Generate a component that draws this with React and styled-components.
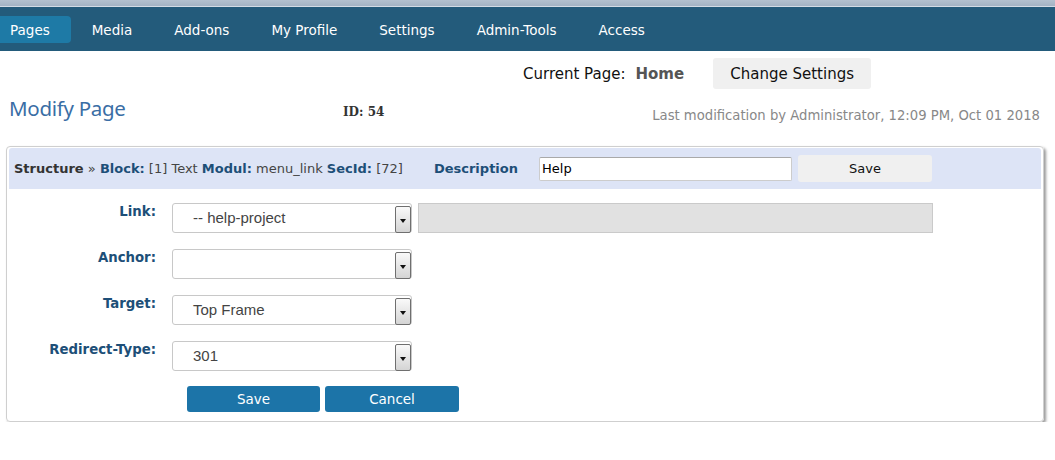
import React from 'react';
import styled, { createGlobalStyle } from 'styled-components';

const GlobalStyle = createGlobalStyle`
  body {
    margin: 0;
    background: #fff;
    font-family: "DejaVu Sans", Verdana, sans-serif;
    font-size: 13px;
    color: #333;
  }
`;

const TopStrip = styled.div`
  height: 6px;
  background: linear-gradient(#b3c1cf, #a3b3c4);
  border-bottom: 1px solid #d3dce5;
`;

const Nav = styled.nav`
  height: 44px;
  background: #235b7b;
  display: flex;
  align-items: center;
`;

const NavList = styled.ul`
  list-style: none;
  margin: 1px 0 0 -11px;
  padding: 0;
  display: flex;
`;

const NavItem = styled.li`
  padding: 0 21px;
  height: 27px;
  line-height: 28px;
  border-radius: 4px;
  color: #fff;
  font-size: 13.5px;
  background: ${(p) => (p.$active ? '#1e7aa6' : 'transparent')};
`;

const CurrentBar = styled.div`
  display: flex;
  align-items: center;
  padding-left: 523px;
  margin-top: 7px;
  font-size: 15px;
  color: #111;
`;

const CurrentName = styled.b`
  color: #555;
  margin-left: 10px;
`;

const GreyButton = styled.button`
  background: #f0f0f0;
  border: none;
  border-radius: 3px;
  font-family: "DejaVu Sans", Verdana, sans-serif;
  font-size: ${(p) => p.$size || 13}px;
  color: #111;
  width: ${(p) => p.$w}px;
  height: ${(p) => p.$h}px;
  margin-left: ${(p) => p.$ml || 0}px;
  padding: 0;
`;

const TitleRow = styled.div`
  display: grid;
  grid-template-columns: 334px 1fr auto;
  align-items: center;
  padding: 0 15px 0 9px;
  height: 38px;
`;

const Title = styled.h1`
  margin: 0;
  font-family: "Noto Sans", sans-serif;
  font-weight: 400;
  font-size: 20.5px;
  color: #3a6ea5;
  letter-spacing: -0.3px;
`;

const PageId = styled.span`
  font-family: "DejaVu Serif", serif;
  font-weight: bold;
  font-size: 12px;
  color: #333;
  padding-top: 8px;
`;

const LastMod = styled.span`
  color: #888;
  font-size: 13.2px;
  padding-top: 14px;
`;

const Panel = styled.div`
  margin: 19px 11px 0 6px;
  border: 1px solid #cfcfcf;
  border-radius: 4px;
  padding: 1px 2px 9px;
  box-shadow: 2px 2px 3px rgba(0, 0, 0, 0.4);
`;

const Band = styled.div`
  background: #dde4f6;
  height: 41px;
  display: flex;
  align-items: center;
  padding-left: 5px;
  border-radius: 3px 3px 0 0;
`;

const Crumbs = styled.span`
  color: #444;
  white-space: nowrap;
  b {
    color: #1d4f78;
  }
  b.dark {
    color: #333;
  }
`;

const DescLabel = styled.b`
  color: #1d4f78;
  margin-left: 31px;
  margin-right: 21px;
`;

const TextInput = styled.input`
  width: 253px;
  height: 24px;
  box-sizing: border-box;
  border: 1px solid #ccc;
  border-top-color: #a9a9a9;
  border-radius: 2px;
  font-family: "DejaVu Sans", Verdana, sans-serif;
  font-size: 13px;
  padding: 0 2px;
  margin-right: 6px;
  color: #000;
`;

const Rows = styled.div`
  display: flex;
  flex-direction: column;
  gap: 16px;
  padding-top: 14px;
`;

const Row = styled.div`
  display: flex;
  align-items: flex-start;
`;

const Label = styled.label`
  width: 147px;
  text-align: right;
  font-weight: bold;
  font-size: 13.3px;
  color: #1d4f78;
  padding-top: 1px;
  margin-right: 16px;
`;

const SelectBox = styled.div`
  position: relative;
  width: 240px;
  height: 30px;
  box-sizing: border-box;
  border: 1px solid #c8c8c8;
  border-radius: 3px;
  font-family: "Liberation Sans", Arial, sans-serif;
  font-size: 15px;
  color: #444;
  line-height: 28px;
  padding-left: 20px;
`;

const Arrow = styled.span`
  position: absolute;
  right: 0;
  top: 2px;
  bottom: -1px;
  width: 14px;
  border: 1px solid #6f6f6f;
  border-radius: 2px;
  background: linear-gradient(#fafafa, #d4d4d4);
  &::after {
    content: '';
    position: absolute;
    left: 4px;
    top: 12px;
    border-left: 3.5px solid transparent;
    border-right: 3.5px solid transparent;
    border-top: 4px solid #111;
  }
`;

const GreyField = styled.div`
  width: 515px;
  height: 30px;
  box-sizing: border-box;
  margin-left: 6px;
  background: #e1e1e1;
  border: 1px solid #cacaca;
`;

const Actions = styled.div`
  display: flex;
  gap: 5px;
  padding-left: 178px;
  margin-top: 15px;
`;

const BlueButton = styled.button`
  width: ${(p) => p.$w}px;
  height: 26px;
  background: #1c74a8;
  color: #fff;
  border: none;
  border-radius: 3px;
  font-family: "DejaVu Sans", Verdana, sans-serif;
  font-size: 13.5px;
  padding: 0;
`;

function Select({ value }) {
  return (
    <SelectBox>
      {value}
      <Arrow />
    </SelectBox>
  );
}

const navItems = ['Pages', 'Media', 'Add-ons', 'My Profile', 'Settings', 'Admin-Tools', 'Access'];

export default function App() {
  return (
    <>
      <GlobalStyle />
      <TopStrip />
      <Nav>
        <NavList>
          {navItems.map((n, i) => (
            <NavItem key={n} $active={i === 0}>{n}</NavItem>
          ))}
        </NavList>
      </Nav>

      <CurrentBar>
        Current Page: <CurrentName>Home</CurrentName>
        <GreyButton $w={158} $h={31} $size={15} $ml={29}>Change Settings</GreyButton>
      </CurrentBar>

      <TitleRow>
        <Title>Modify Page</Title>
        <PageId>ID: 54</PageId>
        <LastMod>Last modification by Administrator, 12:09 PM, Oct 01 2018</LastMod>
      </TitleRow>

      <Panel>
        <Band>
          <Crumbs>
            <b className="dark">Structure</b> » <b>Block:</b> [1] Text <b>Modul:</b> menu_link <b>SecId:</b> [72]
          </Crumbs>
          <DescLabel>Description</DescLabel>
          <TextInput defaultValue="Help" />
          <GreyButton $w={134} $h={27}>Save</GreyButton>
        </Band>

        <Rows>
          <Row>
            <Label>Link:</Label>
            <Select value="-- help-project" />
            <GreyField />
          </Row>
          <Row>
            <Label>Anchor:</Label>
            <Select value="" />
          </Row>
          <Row>
            <Label>Target:</Label>
            <Select value="Top Frame" />
          </Row>
          <Row>
            <Label>Redirect-Type:</Label>
            <Select value="301" />
          </Row>
        </Rows>

        <Actions>
          <BlueButton $w={133}>Save</BlueButton>
          <BlueButton $w={134}>Cancel</BlueButton>
        </Actions>
      </Panel>
    </>
  );
}
